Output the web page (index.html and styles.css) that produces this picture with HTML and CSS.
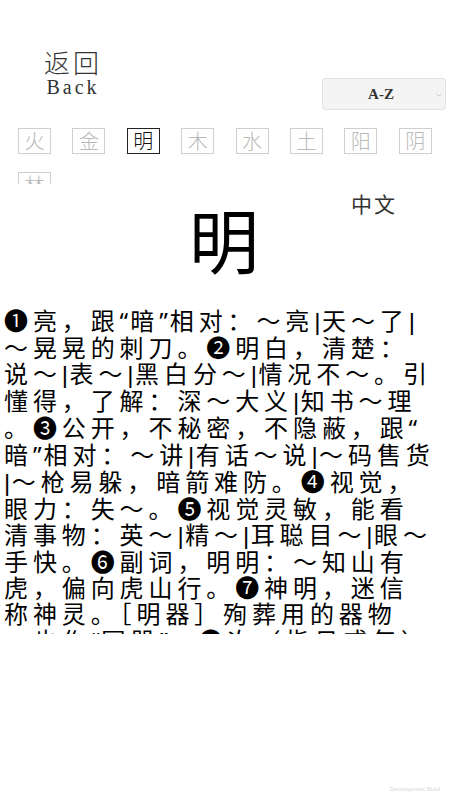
FILE: index.html
```html
<!DOCTYPE html>
<html lang="zh-CN">
<head>
<meta charset="utf-8">
<title>明</title>
<link rel="stylesheet" href="styles.css">
</head>
<body>
<div class="page">
  <header class="header">
    <div class="back">
      <div class="back-zh">返回</div>
      <div class="back-en">Back</div>
    </div>
    <div class="sort">
      <span class="sort-label">A-Z</span>
      <svg class="sort-arrow" width="6" height="4" viewBox="0 0 6 4"><path d="M0.5 0.8 L3 3.2 L5.5 0.8" fill="none" stroke="#b5b5b5" stroke-width="0.8"/></svg>
    </div>
  </header>

  <div class="tiles">
    <div class="tile">火</div>
    <div class="tile">金</div>
    <div class="tile active">明</div>
    <div class="tile">木</div>
    <div class="tile">水</div>
    <div class="tile">土</div>
    <div class="tile">阳</div>
    <div class="tile">阴</div>
    <div class="tile">林</div>
  </div>

  <section class="hero">
    <div class="hero-spacer"></div>
    <div class="hero-char">明</div>
    <div class="hero-lang">中文</div>
  </section>

  <div class="definition">❶亮，跟<span class="q">“</span>暗<span class="q">”</span>相对：～亮<span class="bar">|</span>天～了<span class="bar">|</span><br>～晃晃的刺刀。❷明白，清楚：<br>说～<span class="bar">|</span>表～<span class="bar">|</span>黑白分～<span class="bar">|</span>情况不～。引<br>懂得，了解：深～大义<span class="bar">|</span>知书～理<br>。❸公开，不秘密，不隐蔽，跟<span class="q">“</span><br>暗<span class="q">”</span>相对：～讲<span class="bar">|</span>有话～说<span class="bar">|</span>～码售货<br><span class="bar">|</span>～枪易躲，暗箭难防。❹视觉，<br>眼力：失～。❺视觉灵敏，能看<br>清事物：英～<span class="bar">|</span>精～<span class="bar">|</span>耳聪目～<span class="bar">|</span>眼～<br>手快。❻副词，明明：～知山有<br>虎，偏向虎山行。❼神明，迷信<br>称神灵。［明器］殉葬用的器物<br>，也作<span class="q">“</span>冥器<span class="q">”</span>。❽次（指日或年）</div>

  <footer class="watermark">Development Build</footer>
</div>
</body>
</html>
```

FILE: styles.css
```css
html, body {
  margin: 0;
  padding: 0;
  background: #ffffff;
}

.page {
  width: 450px;
  height: 800px;
  overflow: hidden;
  font-family: "Noto Sans CJK SC", "Noto Sans", sans-serif;
  color: #000;
}

.header {
  display: flex;
  justify-content: space-between;
  align-items: flex-start;
  height: 128px;
}

.back {
  margin-left: 41px;
  margin-top: 50px;
  text-align: center;
  color: #333;
  white-space: nowrap;
}

.back-zh {
  font-size: 26px;
  line-height: 23px;
  letter-spacing: 3px;
  padding-left: 3px;
  font-weight: 300;
}

.back-en {
  margin-top: 4px;
  font-family: "Liberation Serif", serif;
  font-size: 20px;
  line-height: 20px;
  letter-spacing: 3px;
  padding-left: 3px;
}

.sort {
  margin-top: 78px;
  margin-right: 4px;
  width: 124px;
  height: 32px;
  box-sizing: border-box;
  background: #f4f4f4;
  border: 1px solid #e2e2e2;
  border-radius: 3px;
  display: flex;
  align-items: center;
  justify-content: center;
  padding-right: 6px;
  position: relative;
}

.sort-label {
  font-family: "Liberation Serif", serif;
  font-weight: bold;
  font-size: 15px;
  color: #333;
}

.sort-arrow {
  position: absolute;
  right: 3px;
  top: 14px;
}

.tiles {
  display: flex;
  flex-wrap: wrap;
  column-gap: 21.4px;
  row-gap: 18px;
  padding-left: 18px;
  height: 56px;
  overflow: hidden;
}

.tile {
  width: 33px;
  height: 26px;
  box-sizing: border-box;
  border: 1.5px solid #cfcfcf;
  color: #b9b9b9;
  font-size: 20px;
  line-height: 23px;
  text-align: center;
  font-weight: 300;
}

.tile.active {
  border-color: #222;
  color: #111;
}

.hero {
  display: grid;
  grid-template-columns: 1fr auto 1fr;
  height: 123px;
}

.hero-char {
  margin-top: 20px;
  font-size: 70px;
  line-height: 70px;
  letter-spacing: 2px;
}

.hero-lang {
  margin-top: 8px;
  margin-left: 90px;
  font-size: 21px;
  line-height: 22px;
  color: #333;
  letter-spacing: 2px;
  white-space: nowrap;
}

.definition {
  height: 327px;
  overflow: hidden;
  padding-left: 4px;
  font-size: 24px;
  line-height: 26.3px;
  letter-spacing: 4.9px;
  white-space: nowrap;
  color: #000;
}

.q {
  font-family: "Noto Sans", sans-serif;
  letter-spacing: 2px;
  line-height: 1;
}

.bar {
  font-family: "Liberation Sans", sans-serif;
  letter-spacing: 1.5px;
  line-height: 1;
}

.watermark {
  margin-top: 152px;
  text-align: right;
  padding-right: 10px;
  font-family: "Liberation Sans", sans-serif;
  font-size: 6px;
  color: #d8d8d8;
}
```
